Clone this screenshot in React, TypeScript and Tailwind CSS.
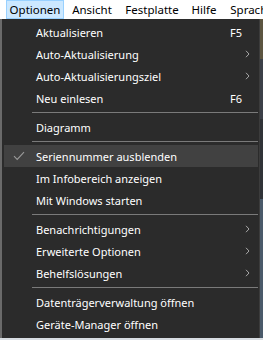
import { ReactNode } from 'react';

type Item =
  | { kind: 'sep' }
  | { kind: 'item'; label: string; shortcut?: string; sub?: boolean; checked?: boolean; hot?: boolean };

const items: Item[] = [
  { kind: 'item', label: 'Aktualisieren', shortcut: 'F5' },
  { kind: 'item', label: 'Auto-Aktualisierung', sub: true },
  { kind: 'item', label: 'Auto-Aktualisierungsziel', sub: true },
  { kind: 'item', label: 'Neu einlesen', shortcut: 'F6' },
  { kind: 'sep' },
  { kind: 'item', label: 'Diagramm' },
  { kind: 'sep' },
  { kind: 'item', label: 'Seriennummer ausblenden', checked: true, hot: true },
  { kind: 'item', label: 'Im Infobereich anzeigen' },
  { kind: 'item', label: 'Mit Windows starten' },
  { kind: 'sep' },
  { kind: 'item', label: 'Benachrichtigungen', sub: true },
  { kind: 'item', label: 'Erweiterte Optionen', sub: true },
  { kind: 'item', label: 'Behelfslösungen', sub: true },
  { kind: 'sep' },
  { kind: 'item', label: 'Datenträgerverwaltung öffnen' },
  { kind: 'item', label: 'Geräte-Manager öffnen' },
];

function Chevron() {
  return (
    <svg width="5" height="8" viewBox="0 0 5 8" className="block">
      <path d="M1 0.8 L4 4 L1 7.2" fill="none" stroke="#a8a8a8" strokeWidth="1" />
    </svg>
  );
}

function Check() {
  return (
    <svg width="12" height="10" viewBox="0 0 12 10" className="block">
      <path d="M1 5.2 L4.2 8.4 L11 1.2" fill="none" stroke="#9a9a9a" strokeWidth="1.1" />
    </svg>
  );
}

function MenuTop({ children, active, w }: { children: ReactNode; active?: boolean; w: string }) {
  return (
    <div
      className={
        'flex h-[19px] shrink-0 items-center justify-center whitespace-nowrap border ' +
        w +
        ' ' +
        (active ? 'border-[#99d1ff] bg-[#cce8ff]' : 'border-transparent')
      }
    >
      {children}
    </div>
  );
}

export default function App() {
  return (
    <div
      className="flex h-[340px] w-[263px] flex-col overflow-hidden bg-[#2b2b2b] text-[11px] leading-none"
      style={{ fontFamily: '"Noto Sans", "Open Sans", Arial, sans-serif' }}
    >
      {/* Menüleiste */}
      <div className="flex h-[19px] shrink-0 items-stretch gap-[2px] bg-white pl-[6px] text-[11.5px] text-black">
        <MenuTop active w="w-[58px]">Optionen</MenuTop>
        <MenuTop w="w-[52px]">Ansicht</MenuTop>
        <MenuTop w="w-[64px]">Festplatte</MenuTop>
        <MenuTop w="w-[36px]">Hilfe</MenuTop>
        <MenuTop w="w-[56px]">Sprache</MenuTop>
      </div>

      <div className="flex flex-1">
        {/* Dropdown */}
        <div className="flex h-[319px] w-[260px] flex-col border-l-2 border-r border-[#6a6a6a] border-r-[#3c3c3c] bg-[#2b2b2b] pt-[2px] text-white">
          {items.map((it, i) =>
            it.kind === 'sep' ? (
              <div key={i} className="flex h-[7px] items-center pl-[30px] pr-[1px]">
                <div className="h-px w-full bg-[#7a7a7a]" />
              </div>
            ) : (
              <div
                key={i}
                className={
                  'ml-[2px] mr-[1px] flex h-[22px] items-center ' + (it.hot ? 'bg-[#414141]' : '')
                }
              >
                <div className="flex w-[32px] items-center justify-center pr-[2px]">
                  {it.checked && <Check />}
                </div>
                <span className="flex-1 whitespace-nowrap">{it.label}</span>
                {it.shortcut && <span className="w-[28px] text-left">{it.shortcut}</span>}
                {it.sub && (
                  <div className="flex w-[13px] items-center justify-start">
                    <Chevron />
                  </div>
                )}
              </div>
            )
          )}
        </div>
        <div className="flex flex-1 flex-col bg-[#2a2a2a]">
          <div className="h-[40px] bg-[#5c5540]" />
          <div className="h-[60px] bg-[#3c4048]" />
          <div className="h-[80px] bg-[#303338]" />
          <div className="flex-1 bg-[#4a5a6a]" />
        </div>
      </div>
      <div className="h-[2px] shrink-0 bg-[#d8dde2]" />
    </div>
  );
}
